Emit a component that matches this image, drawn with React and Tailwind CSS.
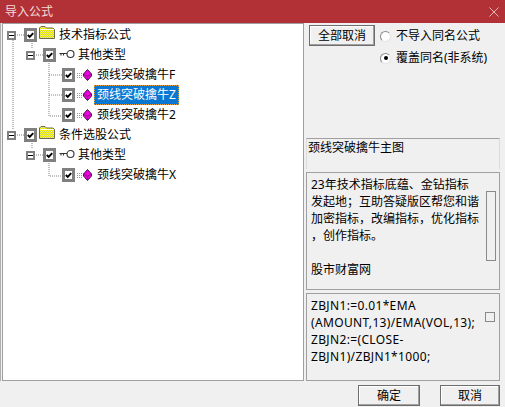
import React from 'react';

const FONT = 'font-["Noto_Sans","Noto_Sans_CJK_SC",sans-serif]';

function Check({ className = '' }) {
  return (
    <span className={`w-[13px] h-[14px] shrink-0 border-[3px] border-[#808080] bg-white flex items-center justify-center ${className}`}>
      <svg width="9" height="8" viewBox="0 0 9 8">
        <path d="M1 4 L3.5 6.5 L8 1.5" fill="none" stroke="#000" strokeWidth="2.4" />
      </svg>
    </span>
  );
}

function Expander() {
  return (
    <span className="w-[9px] h-[9px] shrink-0 border-2 border-[#808080] bg-white flex items-center justify-center">
      <span className="w-[5px] h-px shrink-0 bg-black" />
    </span>
  );
}

function Folder() {
  return (
    <svg width="16" height="14" viewBox="0 0 16 14" className="shrink-0 mt-[-5px]">
      <defs>
        <pattern id="dither" width="2" height="2" patternUnits="userSpaceOnUse">
          <rect width="2" height="2" fill="#ffff00" />
          <rect width="1" height="1" fill="#d0d070" />
          <rect x="1" y="1" width="1" height="1" fill="#d0d070" />
        </pattern>
      </defs>
      <path d="M0.5 12.5 V2 L2 0.5 H6 L7.5 2 H14 L15.5 3.5 V12.5 Z" fill="url(#dither)" stroke="#6b6b50" />
      <path d="M1.5 3.5 H14.5" stroke="#fff" />
    </svg>
  );
}

function KeyIcon() {
  return (
    <svg width="16" height="10" viewBox="0 0 16 10" className="shrink-0 mt-[-3px]">
      <circle cx="11.5" cy="5" r="3.5" fill="#fff" stroke="#333" strokeWidth="1.1" />
      <path d="M0.5 4.5 H8 M2 4.5 V6.5 M4.5 4.5 V6.5" fill="none" stroke="#333" strokeWidth="1.1" />
    </svg>
  );
}

function FormulaIcon() {
  return (
    <svg width="15" height="12" viewBox="0 0 15 12" className="shrink-0">
      <path d="M0 4.5 H6 M0 6.5 H6 M0 8.5 H6" stroke="#9a9a9a" strokeDasharray="1 1" />
      <path d="M10.5 0.5 L14.5 5 V7 L10.5 11.5 L6.5 7 V5 Z" fill="#f000e0" stroke="#50105a" />
      <path d="M6.5 5 L10.5 7.5 L14.5 5 M10.5 7.5 V11" fill="none" stroke="#8a1080" />
    </svg>
  );
}

function TreeRow({ indent, expander, icon, label, selected, labelGap }) {
  return (
    <div className={`h-[20px] flex items-center ${indent}`}>
      {expander && <Expander />}
      {expander && <span className="w-[8px]" />}
      <Check />
      {icon}
      <span
        className={`${labelGap} h-[20px] px-[2px] leading-[18px] text-[12px] whitespace-nowrap ${
          selected ? 'bg-[#0a78d2] text-white border border-dotted border-[#e8a040]' : 'text-black border border-transparent'
        }`}
      >
        {label}
      </span>
    </div>
  );
}

const ROWS = [
  { indent: 'pl-[4px]', expander: true, labelGap: 'ml-[1px]', icon: <span className="ml-[2px]"><Folder /></span>, label: '技术指标公式' },
  { indent: 'pl-[23px]', expander: true, labelGap: 'ml-0', icon: <span className="ml-[3px]"><KeyIcon /></span>, label: '其他类型' },
  { indent: 'pl-[59px]', labelGap: 'ml-[2px]', icon: <span className="ml-[2px]"><FormulaIcon /></span>, label: '颈线突破擒牛F' },
  { indent: 'pl-[59px]', labelGap: 'ml-[2px]', icon: <span className="ml-[2px]"><FormulaIcon /></span>, label: '颈线突破擒牛Z', selected: true },
  { indent: 'pl-[59px]', labelGap: 'ml-[2px]', icon: <span className="ml-[2px]"><FormulaIcon /></span>, label: '颈线突破擒牛2' },
  { indent: 'pl-[4px]', expander: true, labelGap: 'ml-[1px]', icon: <span className="ml-[2px]"><Folder /></span>, label: '条件选股公式' },
  { indent: 'pl-[23px]', expander: true, labelGap: 'ml-0', icon: <span className="ml-[3px]"><KeyIcon /></span>, label: '其他类型' },
  { indent: 'pl-[59px]', labelGap: 'ml-[2px]', icon: <span className="ml-[2px]"><FormulaIcon /></span>, label: '颈线突破擒牛X' },
];

function Radio({ checked, label }) {
  return (
    <div className="flex items-center h-[20px] text-[12px]">
      <span className="w-[11px] h-[11px] rounded-full bg-white border border-[#8a8a8a] border-r-[#e4e4e4] border-b-[#e4e4e4] flex items-center justify-center">
        {checked && <span className="w-[4px] h-[4px] rounded-full bg-black" />}
      </span>
      <span className="ml-[5px] whitespace-nowrap">{label}</span>
    </div>
  );
}

function Btn({ children, className = '' }) {
  return (
    <button className={`flex items-center justify-center text-[12px] bg-[#f0f0f0] border border-[#6d6d6d] shadow-[inset_-1px_-1px_0_#a0a0a0,inset_1px_1px_0_#fff] ${className}`}>
      {children}
    </button>
  );
}

export default function App() {
  return (
    <div className={`relative w-[505px] h-[407px] overflow-hidden flex flex-col bg-[#f0f0f0] text-black ${FONT}`}>
      <div className="h-[23px] shrink-0 bg-[#b23137] flex items-center justify-between pl-[5px] pr-[6px] text-[12px] text-[#f4dcdc]">
        <span>导入公式</span>
        <svg width="10" height="10" viewBox="0 0 10 10">
          <path d="M0.5 0.5 L9.5 9.5 M9.5 0.5 L0.5 9.5" stroke="#e8b8b8" />
        </svg>
      </div>

      <div className="flex flex-1 min-h-0 border-l border-l-[#b0b0b0] pl-px">
        <div className="relative w-[302px] h-[358px] border border-[#a0a0a0] bg-white pt-[1px]">
          <svg className="absolute left-0 top-0" width="300" height="200">
            <g stroke="#808080" strokeDasharray="1 1" fill="none">
              <path d="M14 11 H21 M10 16 V106" />
              <path d="M33 31 H40 M29 17 V25" />
              <path d="M46 35 V92 H59 M46 51 H59 M46 71 H59" />
              <path d="M14 111 H21 M33 131 H40 M29 117 V125" />
              <path d="M46 135 V152 H59" />
            </g>
          </svg>
          <div className="relative">
            {ROWS.map((r, i) => (
              <TreeRow key={i} {...r} />
            ))}
          </div>
        </div>

        <div className="flex-1 pl-[2px] pr-[5px] flex flex-col">
          <div className="flex h-[115px] pl-[3px] pt-[2px] gap-[5px]">
            <Btn className="w-[66px] h-[21px]">全部取消</Btn>
            <div className="pt-[1px]">
              <Radio label="不导入同名公式" />
              <div className="h-[2px]" />
              <Radio checked label="覆盖同名(非系统)" />
            </div>
          </div>
          <div className="h-[31px] border-t border-[#a0a0a0] border-x border-x-[#dcdcdc] text-[12px] leading-[17px] pl-px">
            颈线突破擒牛主图
          </div>
          <div className="relative mt-[3px] h-[119px] border border-[#a0a0a0] pl-[4px] pt-[3px] pr-[14px] text-[12px] leading-[17px] whitespace-nowrap">
            <p>23年技术指标底蕴、金钻指标</p>
            <p>发起地；互助答疑版区帮您和谐</p>
            <p>加密指标，改编指标，优化指标</p>
            <p>，创作指标。</p>
            <p className="mt-[17px]">股市财富网</p>
            <span className="absolute right-[3px] top-[18px] w-[10px] h-[70px] border border-[#8a8a8a] bg-[#f0f0f0]" />
          </div>
          <div className="relative mt-[3px] h-[88px] border border-[#a0a0a0] pl-[4px] pt-[3px] pr-[18px] text-[12px] leading-[17px] tracking-[0.35px] whitespace-nowrap">
            <p>ZBJN1:=0.01*EMA</p>
            <p>(AMOUNT,13)/EMA(VOL,13);</p>
            <p>ZBJN2:=(CLOSE-</p>
            <p>ZBJN1)/ZBJN1*1000;</p>
            <span className="absolute right-[4px] top-[18px] w-[10px] h-[10px] border border-[#8a8a8a] bg-[#f0f0f0]" />
          </div>
        </div>
      </div>

      <div className="h-[26px] shrink-0 flex justify-end gap-[20px] pr-[5px] pt-[4px]">
        <Btn className="w-[62px] h-[21px]">确定</Btn>
        <Btn className="w-[60px] h-[21px]">取消</Btn>
      </div>
    </div>
  );
}
